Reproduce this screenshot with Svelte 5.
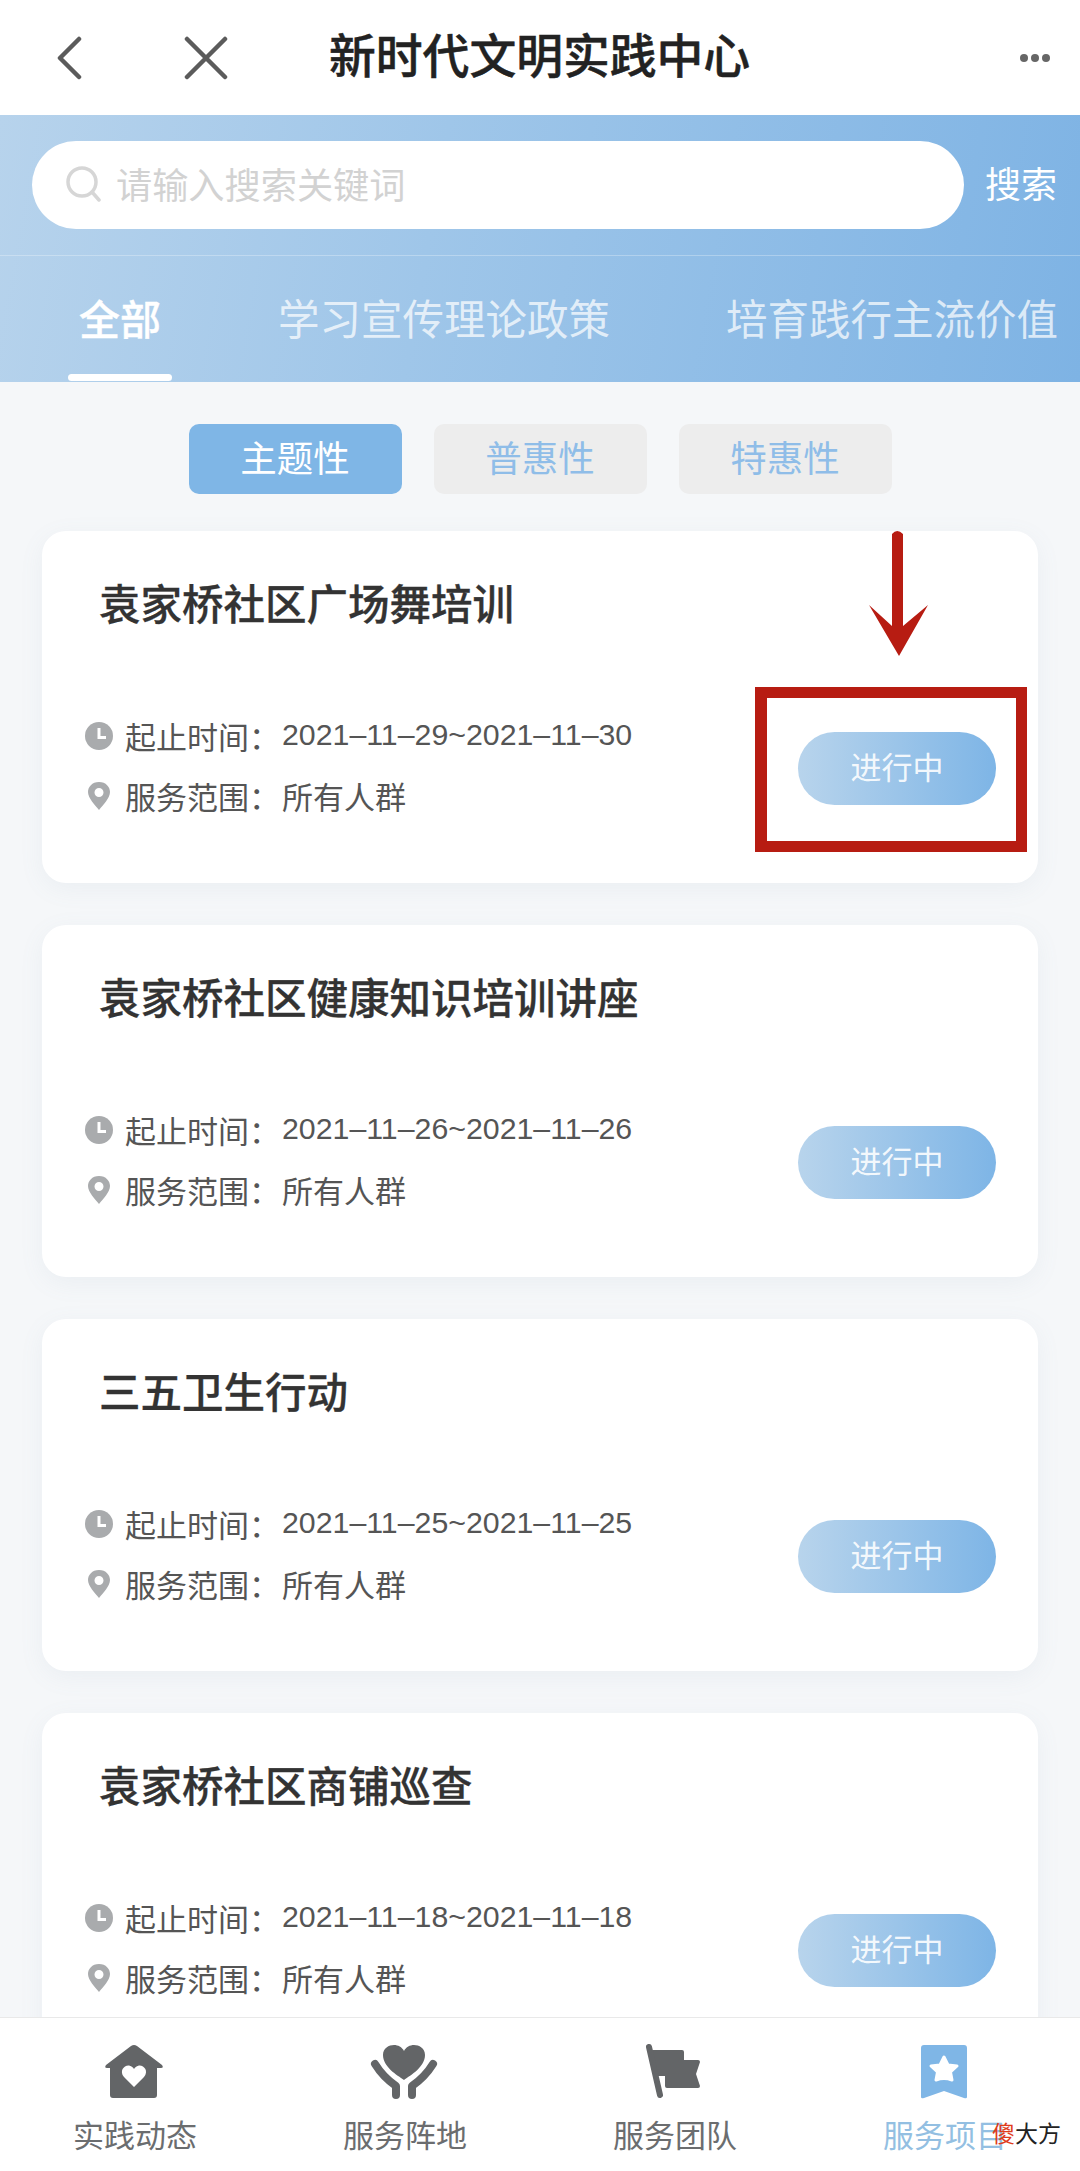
<script>
  const tabs = [
    { label: '全部', active: true },
    { label: '学习宣传理论政策' },
    { label: '培育践行主流价值' }
  ];
  const filters = [
    { label: '主题性', active: true },
    { label: '普惠性' },
    { label: '特惠性' }
  ];
  const cards = [
    { title: '袁家桥社区广场舞培训', date: '2021–11–29~2021–11–30' },
    { title: '袁家桥社区健康知识培训讲座', date: '2021–11–26~2021–11–26' },
    { title: '三五卫生行动', date: '2021–11–25~2021–11–25' },
    { title: '袁家桥社区商铺巡查', date: '2021–11–18~2021–11–18' }
  ];
</script>

<div class="page">
  <header class="nav">
    <svg class="back" viewBox="0 0 28 44" width="28" height="44"><path d="M24 3 L5 22 L24 41" /></svg>
    <svg class="close" viewBox="0 0 44 44" width="44" height="44"><path d="M3 3 L41 41 M41 3 L3 41" /></svg>
    <h1>新时代文明实践中心</h1>
    <div class="dots"><i></i><i></i><i></i></div>
  </header>

  <section class="band">
    <div class="search-row">
      <div class="search">
        <svg viewBox="0 0 36 36" width="36" height="36"><circle cx="16" cy="16" r="14" /><path d="M26 26 L33 34" /></svg>
        <span>请输入搜索关键词</span>
      </div>
      <span class="search-btn">搜索</span>
    </div>
    <nav class="tabs">
      {#each tabs as t}
        <span class="tab" class:active={t.active}>{t.label}</span>
      {/each}
    </nav>
  </section>

  <main class="content">
    <div class="filters">
      {#each filters as f}
        <span class="filter" class:active={f.active}>{f.label}</span>
      {/each}
    </div>
    <div class="cards">
      {#each cards as c, i}
        <article class="card">
          <h2>{c.title}</h2>
          <div class="row">
            <div class="info">
              <div class="line">
                <svg viewBox="0 0 28 28" width="28" height="28"><circle cx="14" cy="14" r="14" fill="#a9abad" /><path d="M14 6 V15.5 H21" fill="none" stroke="#fff" stroke-width="3" /></svg>
                <span class="key">起止时间：</span><span class="date">{c.date}</span>
              </div>
              <div class="line">
                <svg viewBox="0 0 28 28" width="28" height="28"><path fill="#a9abad" fill-rule="evenodd" d="M14 0 C7 0 3 5 3 10 C3 16 10 23 14 28 C18 23 25 16 25 10 C25 5 21 0 14 0 Z M14 6 A4.5 4.5 0 1 1 14 15 A4.5 4.5 0 1 1 14 6 Z" /></svg>
                <span class="key">服务范围：</span><span class="val">所有人群</span>
              </div>
            </div>
            <span class="pill">进行中</span>
          </div>
          {#if i === 0}
            <div class="mark"></div>
            <svg class="arrow" viewBox="0 0 62 128" width="62" height="128">
              <path d="M25 4 Q30 -2 36 4 L36 96 L61 75 L32 126 L2 75 L25 96 Z" fill="#b71c12" />
            </svg>
          {/if}
        </article>
      {/each}
    </div>
  </main>

  <footer class="tabbar">
    <div class="item">
      <svg viewBox="0 0 60 56" width="60" height="56"><path fill="#636567" fill-rule="evenodd" d="M27 2 Q30 0 33 2 L58 21 Q60 24 57 24 H53 V51 Q53 54 50 54 H9 Q6 54 6 51 V24 H3 Q0 24 2 21 Z M30 43 L40 33 C45 27 40 21 35 21.500 C33 22 31 23 30 25 C29 23 27 22 25 21.500 C20 21 15 27 20 33 Z" /></svg>
      <span>实践动态</span>
    </div>
    <div class="item">
      <svg viewBox="0 0 70 58" width="70" height="58">
        <path fill="#636567" d="M35 37 C28 32 14 24 14 12 C14 5 20 2 25 2 C29 2 33 4 35 8 C37 4 41 2 45 2 C50 2 56 5 56 12 C56 24 42 32 35 37 Z" />
        <path fill="none" stroke="#636567" stroke-width="8" stroke-linecap="round" stroke-linejoin="round" d="M6 21 Q14 34 27 43 V52 M64 21 Q56 34 43 43 V52" />
      </svg>
      <span>服务阵地</span>
    </div>
    <div class="item">
      <svg viewBox="0 0 60 58" width="60" height="58">
        <path fill="#636567" d="M8 7 H38 Q40 7 40 9 V17 H54 Q56 17 56 19 L52 31 L56 43 Q56 45 54 45 H23 Q21 45 21 43 V33 H13 Z" />
        <path fill="none" stroke="#636567" stroke-width="6" stroke-linecap="round" d="M5 4 L16 52" />
      </svg>
      <span>服务团队</span>
    </div>
    <div class="item on">
      <svg viewBox="0 0 46 54" width="46" height="54">
        <path fill="#7fb6e6" d="M3 0 H43 Q46 0 46 3 V52 Q46 54 43 53 L23 46 L3 53 Q0 54 0 52 V3 Q0 0 3 0 Z" />
        <path fill="#fff" stroke="#fff" stroke-width="3" stroke-linejoin="round" d="M23 12 L27 20 L36 21 L29.500 27 L31 35 Q23 32 15 35 L16.500 27 L10 21 L19 20 Z" />
      </svg>
      <span>服务项目</span>
    </div>
    <div class="wm"><b>傻</b>大方</div>
  </footer>
</div>

<style>
  :global(body) { margin: 0; background: #f5f7f9; }
  .page {
    width: 1080px;
    height: 2171px;
    display: flex;
    flex-direction: column;
    overflow: hidden;
    font-family: "Noto Sans CJK SC", "Noto Sans", sans-serif;
    background: #f5f7f9;
  }
  .nav {
    height: 115px;
    flex: none;
    background: #fff;
    display: flex;
    align-items: center;
    padding-left: 55px;
    padding-right: 30px;
    box-sizing: border-box;
  }
  .nav svg path { fill: none; stroke: #5b5b5b; stroke-width: 4.500; stroke-linecap: round; stroke-linejoin: round; }
  .back { margin-right: 101px; margin-top: 1px; }
  .close { margin-right: 101px; margin-top: 1px; }
  h1 {
    margin: 0;
    font-size: 46.800px;
    line-height: 1;
    font-weight: 500;
    -webkit-text-stroke: .5px #222;
    color: #222;
    flex: 1;
    margin-top: -8px;
  }
  .dots { display: flex; gap: 3px; margin-top: 1px; }
  .dots i { width: 8px; height: 8px; border-radius: 50%; background: #666; display: block; }

  .band {
    height: 267px;
    flex: none;
    box-sizing: border-box;
    background: linear-gradient(100deg, #b7d3ec 0%, #9fc6e9 40%, #7eb3e4 100%);
  }
  .search-row {
    height: 141px;
    box-sizing: border-box;
    border-bottom: 1px solid rgba(255, 255, 255, .28);
    padding: 26px 23px 0 32px;
    display: flex;
    align-items: flex-start;
    justify-content: space-between;
  }
  .search {
    width: 932px;
    height: 88px;
    border-radius: 44px;
    background: #fff;
    display: flex;
    align-items: center;
    padding-left: 34px;
    box-sizing: border-box;
    gap: 14px;
    color: #d2d2d2;
    font-size: 36.200px;
  }
  .search span { margin-top: -5px; }
  .search svg { fill: none; stroke: #d6d6d6; stroke-width: 3.500; stroke-linecap: round; flex: none; margin-top: -3px; }
  .search-btn { color: #fff; font-size: 36px; line-height: 82px; }
  .tabs {
    display: flex;
    height: 126px;
    padding-left: 68px;
    box-sizing: border-box;
    white-space: nowrap;
  }
  .tab {
    flex: none;
    color: rgba(255, 255, 255, .72);
    font-size: 41.500px;
    line-height: 122px;
    margin-right: 116px;
    position: relative;
    height: 126px;
  }
  .tab.active {
    color: #fff;
    font-size: 41px;
    font-weight: 500;
    -webkit-text-stroke: .4px #fff;
    width: 104px;
    text-align: center;
    margin-right: 106px;
  }
  .tab.active::after {
    content: "";
    position: absolute;
    left: 0;
    right: 0;
    bottom: 1px;
    height: 7px;
    border-radius: 4px;
    background: #fff;
  }
  .content { flex: 1; min-height: 0; overflow: hidden; }
  .filters {
    display: flex;
    justify-content: center;
    gap: 32px;
    padding-top: 42px;
  }
  .filter {
    width: 213px;
    height: 70px;
    border-radius: 10px;
    background: #ededed;
    color: #8fbde8;
    font-size: 36.500px;
    line-height: 66px;
    text-align: center;
  }
  .filter.active { background: #7fb6e6; color: #fff; }
  .cards {
    display: flex;
    flex-direction: column;
    gap: 42px;
    padding: 37px 42px 0;
  }
  .card {
    position: relative;
    height: 352px;
    flex: none;
    background: #fff;
    border-radius: 24px;
    box-shadow: 0 6px 24px rgba(120, 140, 160, .08);
    padding: 43px 42px 0;
    box-sizing: border-box;
  }
  h2 {
    margin: 0 0 0 15px;
    font-size: 41.500px;
    line-height: 56px;
    font-weight: 500;
    -webkit-text-stroke: .3px #333;
    color: #333;
  }
  .row {
    display: flex;
    justify-content: space-between;
    align-items: flex-start;
    padding-top: 83px;
  }
  .info { display: flex; flex-direction: column; gap: 16px; }
  .line {
    display: flex;
    align-items: center;
    height: 44px;
    font-size: 31px;
    color: #555;
    white-space: nowrap;
  }
  .line svg { width: 28px; height: 28px; margin-right: 12px; margin-left: 1px; flex: none; margin-top: 2px; }
  .key { width: 157px; flex: none; }
  .date { font-family: "Liberation Sans", "Noto Sans CJK SC", sans-serif; font-size: 30.300px; }
  .pill {
    width: 198px;
    height: 73px;
    border-radius: 37px;
    background: linear-gradient(90deg, #b8d4ec, #7eb5e6);
    color: rgba(255, 255, 255, .9);
    font-size: 31px;
    line-height: 68px;
    text-align: center;
    margin-top: 19px;
  }
  .mark {
    position: absolute;
    left: 713px;
    top: 156px;
    width: 272px;
    height: 165px;
    box-sizing: border-box;
    border: solid #b71c12;
    border-width: 11px 11px 11px 12px;
  }
  .arrow { position: absolute; left: 825px; top: -1px; }
  .tabbar {
    position: relative;
    height: 154px;
    flex: none;
    box-sizing: border-box;
    background: #fff;
    border-top: 1px solid #e9e9e9;
    display: grid;
    grid-template-columns: repeat(4, 270px);
  }
  .item {
    display: flex;
    flex-direction: column;
    align-items: center;
    color: #6b6d6f;
    font-size: 31px;
    line-height: 44px;
  }
  .item svg { margin-top: 25px; height: 58px; display: block; margin-left: -2px; }
  .item span { margin-top: 11px; }
  .item.on { color: #93bfe2; }
  .wm {
    position: absolute;
    left: 992px;
    top: 98px;
    font-size: 23px;
    line-height: 32px;
    color: #222;
  }
  .wm b { color: #e03c1c; font-weight: 400; }
</style>
